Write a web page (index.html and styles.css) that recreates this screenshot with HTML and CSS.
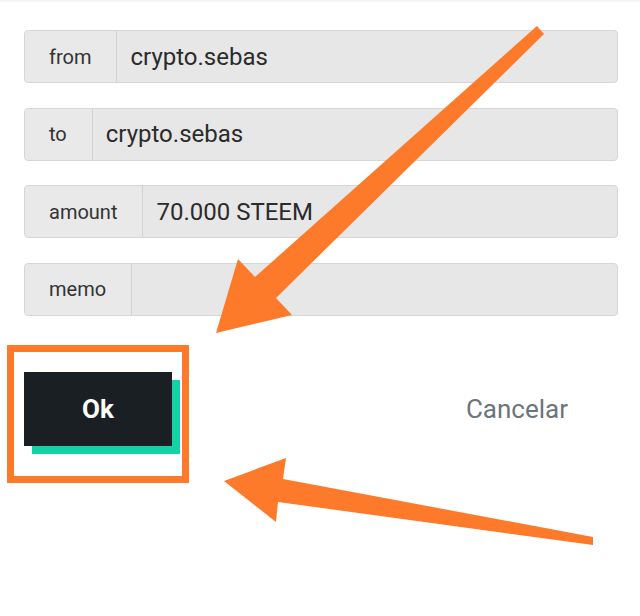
FILE: index.html
```html
<!DOCTYPE html>
<html lang="en">
<head>
  <meta charset="UTF-8">
  <meta name="viewport" content="width=device-width, initial-scale=1.0">
  <title>Transfer</title>
  <link rel="stylesheet" href="styles.css">
</head>
<body>
  <div class="transfer">
    <div class="fields">
      <div class="field">
        <span class="field-label">from</span>
        <span class="field-value">crypto.sebas</span>
      </div>
      <div class="field">
        <span class="field-label">to</span>
        <span class="field-value">crypto.sebas</span>
      </div>
      <div class="field">
        <span class="field-label">amount</span>
        <span class="field-value">70.000 STEEM</span>
      </div>
      <div class="field">
        <span class="field-label">memo</span>
        <span class="field-value"></span>
      </div>
    </div>

    <div class="actions">
      <button class="btn-ok">Ok</button>
      <button class="btn-cancel">Cancelar</button>
    </div>
  </div>

  <!-- annotation overlay -->
  <svg class="annotations" width="640" height="616" viewBox="0 0 640 616">
    <rect x="10.5" y="348.5" width="175" height="131" fill="none" stroke="#fd7a2b" stroke-width="7"/>
    <polygon fill="#fd7a2b" points="537,26 544,34 276,298 292,315 216,333 238,259 255,277"/>
    <polygon fill="#fd7a2b" points="593,537 593,545 278,502 276,522 224,481 286,458 283,479"/>
  </svg>
</body>
</html>
```

FILE: styles.css
```css
body {
  margin: 0;
  background: #fff;
  font-family: Roboto, 'Liberation Sans', sans-serif;
  color: #333;
}
.transfer {
  width: 640px;
  height: 616px;
  box-sizing: border-box;
  padding: 28px 22px 0 24px;
  border-top: 2px solid #f4f4f4;
}
.fields {
  display: flex;
  flex-direction: column;
  gap: 24.5px;
}
.field {
  display: flex;
  height: 53px;
  box-sizing: border-box;
  border: 1px solid #d6d6d6;
  border-radius: 4px;
  background: #e7e7e7;
}
.field-label {
  display: flex;
  align-items: center;
  padding: 0 25px 0 24px;
  font-size: 20px;
  color: #333;
  background: #e9e9e9;
  border-right: 1px solid #d2d2d2;
  border-radius: 4px 0 0 4px;
}
.field-value {
  flex: 1;
  display: flex;
  align-items: center;
  padding-left: 13px;
  font-size: 24px;
  color: #2b2b2b;
}
.actions {
  display: flex;
  align-items: center;
  justify-content: space-between;
  margin-top: 56px;
  padding-right: 50px;
}
.btn-ok {
  width: 148px;
  height: 74px;
  border: none;
  background: #1a1f24;
  color: #fff;
  font-family: Roboto, 'Liberation Sans', sans-serif;
  font-size: 26px;
  font-weight: 700;
  box-shadow: 8px 8px 0 #12d3a6;
  cursor: pointer;
}
.btn-cancel {
  border: none;
  background: none;
  padding: 0;
  font-family: Roboto, 'Liberation Sans', sans-serif;
  font-size: 26px;
  color: #6c747c;
  cursor: pointer;
}
.annotations {
  position: absolute;
  top: 0;
  left: 0;
  pointer-events: none;
}
```
